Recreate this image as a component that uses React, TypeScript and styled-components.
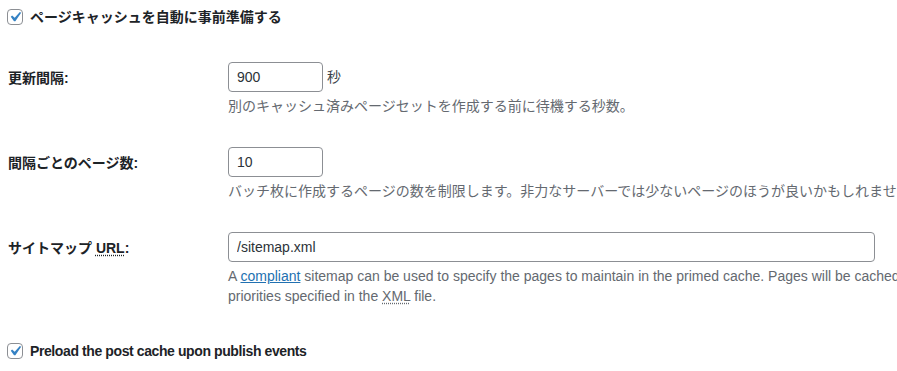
import styled, { createGlobalStyle } from "styled-components";

const GlobalStyle = createGlobalStyle`
  html, body {
    margin: 0;
    padding: 0;
    background: #fff;
    overflow: hidden;
  }
  body {
    font-family: "Liberation Sans", "Noto Sans CJK JP", sans-serif;
    font-size: 14px;
    color: #3c434a;
  }
`;

const Page = styled.div`
  width: 1100px;
  padding: 9px 0 0 8px;
`;

const CheckRow = styled.label<{ $gap?: number }>`
  display: flex;
  align-items: center;
  gap: 7px;
  margin-left: -1px;
  margin-top: ${(p) => p.$gap ?? 0}px;
  height: 16px;
  cursor: pointer;
`;

const Box = styled.span`
  box-sizing: border-box;
  width: 16px;
  height: 16px;
  flex: none;
  border: 1px solid #8c8f94;
  border-radius: 4px;
  background: #fff;
  display: flex;
  align-items: center;
  justify-content: center;
  svg {
    width: 20px;
    height: 20px;
    margin: -3px;
  }
`;

const CheckText = styled.span`
  color: #1d2327;
  font-weight: 600;
  line-height: 16px;
  &.latin {
    letter-spacing: -0.4px;
  }
`;

const Table = styled.div`
  margin-top: 22px;
`;

const Row = styled.div`
  display: grid;
  grid-template-columns: 220px auto;
  padding: 15px 0 16px;
`;

const Label = styled.div`
  color: #1d2327;
  font-weight: 600;
  line-height: 20px;
  padding-top: 6px;
`;

const Field = styled.div`
  display: flex;
  flex-direction: column;
  align-items: flex-start;
`;

const Inline = styled.div`
  display: flex;
  align-items: center;
  gap: 4px;
`;

const Input = styled.input<{ $w: number }>`
  box-sizing: border-box;
  width: ${(p) => p.$w}px;
  height: 30px;
  margin: 0;
  padding: 0 8px;
  border: 1px solid #8c8f94;
  border-radius: 4px;
  background: #fff;
  color: #2c3338;
  font: inherit;
  font-size: 14px;
  outline: none;
`;

const Unit = styled.span`
  color: #3c434a;
  line-height: 20px;
`;

const Description = styled.p`
  margin: 4px 0 0;
  max-width: 790px;
  color: #646970;
  line-height: 20px;
  a {
    color: #2271b1;
    text-decoration: underline;
  }
`;

const Abbr = styled.abbr`
  text-decoration: underline dotted;
  text-underline-offset: 2px;
  cursor: help;
`;

const Check = () => (
  <Box>
    <svg viewBox="0 0 20 20" aria-hidden="true">
      <path fill="#3582c4" d="M14.83 4.89l1.34.94-5.81 8.38H9.02L5.78 9.67l1.34-1.25 2.57 2.4z" />
    </svg>
  </Box>
);

const App = () => {
  return (
    <>
      <GlobalStyle />
      <Page>
        <CheckRow>
          <Check />
          <CheckText>ページキャッシュを自動に事前準備する</CheckText>
        </CheckRow>

        <Table>
          <Row>
            <Label>更新間隔:</Label>
            <Field>
              <Inline>
                <Input $w={95} type="text" defaultValue="900" />
                <Unit>秒</Unit>
              </Inline>
              <Description>別のキャッシュ済みページセットを作成する前に待機する秒数。</Description>
            </Field>
          </Row>

          <Row>
            <Label>間隔ごとのページ数:</Label>
            <Field>
              <Input $w={95} type="text" defaultValue="10" />
              <Description>
                バッチ枚に作成するページの数を制限します。非力なサーバーでは少ないページのほうが良いかもしれません。
              </Description>
            </Field>
          </Row>

          <Row>
            <Label>
              サイトマップ <Abbr title="Uniform Resource Locator">URL</Abbr>:
            </Label>
            <Field>
              <Input $w={647} type="text" defaultValue="/sitemap.xml" />
              <Description>
                A <a href="#">compliant</a> sitemap can be used to specify the pages to maintain in the
                primed cache. Pages will be cached according to the priorities specified in the{" "}
                <Abbr title="Extensible Markup Language">XML</Abbr> file.
              </Description>
            </Field>
          </Row>
        </Table>

        <CheckRow $gap={21}>
          <Check />
          <CheckText className="latin">Preload the post cache upon publish events</CheckText>
        </CheckRow>
      </Page>
    </>
  );
};

export default App;
